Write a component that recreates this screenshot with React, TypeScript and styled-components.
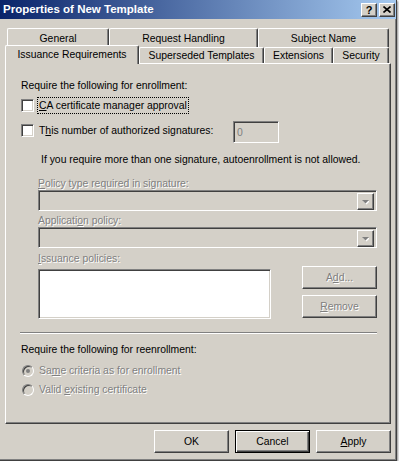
import styled, { createGlobalStyle, css } from 'styled-components';

const GlobalStyle = createGlobalStyle`
  html, body {
    margin: 0;
    padding: 0;
    background: #ffffff;
  }
  body {
    font-family: "Liberation Sans", Arial, sans-serif;
    font-size: 10.4px;
    line-height: 13px;
    color: #000;
  }
`;

const topTabs = [
  { label: 'General', width: 102 },
  { label: 'Request Handling', width: 149 },
  { label: 'Subject Name', width: 131 },
];

const frontTabs = [
  { label: 'Issuance Requirements', width: 134, active: true },
  { label: 'Superseded Templates', width: 125 },
  { label: 'Extensions', width: 69 },
  { label: 'Security', width: 56 },
];

function App() {
  return (
    <>
      <GlobalStyle />
      <Window>
        <TitleBar>
          <Title>Properties of New Template</Title>
          <CaptionButtons>
            <CaptionBtn>
              <HelpGlyph>?</HelpGlyph>
            </CaptionBtn>
            <CaptionBtn>
              <svg width="8" height="7" viewBox="0 0 8 7">
                <path d="M0.5 0.5 L7.5 6.5 M7.5 0.5 L0.5 6.5" stroke="#000" strokeWidth="1.6" />
              </svg>
            </CaptionBtn>
          </CaptionButtons>
        </TitleBar>

        <Body>
          <TabRow $back>
            {topTabs.map((t) => (
              <Tab key={t.label} $w={t.width} $back>
                {t.label}
              </Tab>
            ))}
          </TabRow>
          <TabRow>
            {frontTabs.map((t) => (
              <Tab key={t.label} $w={t.width} $active={t.active}>
                {t.label}
              </Tab>
            ))}
          </TabRow>

          <Panel>
            <Heading>Require the following for enrollment:</Heading>

            <CheckRow>
              <CheckBox />
              <FocusLabel>
                <Key>C</Key>A certificate manager approval
              </FocusLabel>
            </CheckRow>

            <SignRow>
              <CheckBox $top={3} />
              <SignLabel>
                T<Key>h</Key>is number of authorized signatures:
              </SignLabel>
              <NumberField>0</NumberField>
            </SignRow>

            <Note>If you require more than one signature, autoenrollment is not allowed.</Note>

            <PolicyGroup>
              <FieldLabel $top={11}>
                <Key>P</Key>olicy type required in signature:
              </FieldLabel>
              <Combo>
                <DropBtn>
                  <svg width="7" height="5" viewBox="0 0 7 5">
                    <path d="M1 1 H8 L4.5 4.5 Z" fill="#fff" />
                    <path d="M0 0 H7 L3.5 3.5 Z" fill="#808080" />
                  </svg>
                </DropBtn>
              </Combo>

              <FieldLabel $top={3}>
                Applicati<Key>o</Key>n policy:
              </FieldLabel>
              <Combo>
                <DropBtn>
                  <svg width="7" height="5" viewBox="0 0 7 5">
                    <path d="M1 1 H8 L4.5 4.5 Z" fill="#fff" />
                    <path d="M0 0 H7 L3.5 3.5 Z" fill="#808080" />
                  </svg>
                </DropBtn>
              </Combo>

              <ListRow>
                <ListColumn>
                  <FieldLabel $top={4}>
                    <Key>I</Key>ssuance policies:
                  </FieldLabel>
                  <ListBox />
                </ListColumn>
                <SideButtons>
                  <Button disabled>
                    A<Key>d</Key>d...
                  </Button>
                  <Button disabled>
                    <Key>R</Key>emove
                  </Button>
                </SideButtons>
              </ListRow>
            </PolicyGroup>

            <Separator />

            <Heading $top={9}>Require the following for reenrollment:</Heading>

            <RadioRow $top={6}>
              <Radio $checked />
              <RadioLabel>
                Sa<Key>m</Key>e criteria as for enrollment
              </RadioLabel>
            </RadioRow>
            <RadioRow $top={2}>
              <Radio />
              <RadioLabel>
                Valid <Key>e</Key>xisting certificate
              </RadioLabel>
            </RadioRow>
          </Panel>

          <ButtonBar>
            <Button>OK</Button>
            <Button $default>Cancel</Button>
            <Button>
              <Key>A</Key>pply
            </Button>
          </ButtonBar>
        </Body>
      </Window>
    </>
  );
}

export default App;

const disabledText = css`
  color: #808080;
  text-shadow: 1px 1px 0 #ffffff;
`;

const sunken = css`
  box-sizing: border-box;
  border: 1px solid;
  border-color: #808080 #ffffff #ffffff #808080;
  box-shadow: inset 1px 1px #404040, inset -1px -1px #d4d0c8;
`;

const raised = css`
  box-sizing: border-box;
  border: 1px solid;
  border-color: #ffffff #404040 #404040 #ffffff;
  box-shadow: inset -1px -1px #808080, inset 1px 1px #d4d0c8;
  background: #d4d0c8;
`;

const Window = styled.div`
  box-sizing: border-box;
  width: 397px;
  height: 461px;
  background: #d4d0c8;
  border-right: 1px solid #404040;
  border-bottom: 1px solid #404040;
  box-shadow: inset -1px -1px #808080, 1px 1px 2px rgba(0, 0, 0, 0.45);
  display: flex;
  flex-direction: column;
`;

const TitleBar = styled.div`
  height: 19px;
  flex: none;
  display: flex;
  align-items: center;
  padding: 0 1px 0 3px;
  background: linear-gradient(to right, #0a246a, #a6caf0);
`;

const Title = styled.div`
  color: #ffffff;
  font-weight: bold;
  font-size: 11.5px;
  white-space: nowrap;
`;

const CaptionButtons = styled.div`
  margin-left: auto;
  display: flex;
  gap: 2px;
`;

const CaptionBtn = styled.div`
  ${raised};
  width: 16px;
  height: 14px;
  display: flex;
  align-items: center;
  justify-content: center;
`;

const HelpGlyph = styled.span`
  font-weight: bold;
  font-size: 11px;
  line-height: 11px;
  margin-top: 1px;
`;

const Body = styled.div`
  padding: 9px 5px 0 5px;
  display: flex;
  flex-direction: column;
`;

const TabRow = styled.div<{ $back?: boolean }>`
  display: flex;
  align-items: flex-end;
  height: ${(p) => (p.$back ? 19 : 18)}px;
  padding-left: ${(p) => (p.$back ? 2 : 0)}px;
  margin-top: ${(p) => (p.$back ? 0 : -2)}px;
`;

const Tab = styled.div<{ $w: number; $active?: boolean; $back?: boolean }>`
  box-sizing: border-box;
  width: ${(p) => p.$w}px;
  height: ${(p) => (p.$active ? 19 : p.$back ? 19 : 16)}px;
  margin-bottom: ${(p) => (p.$active ? -1 : 0)}px;
  background: #d4d0c8;
  border-top: 1px solid #ffffff;
  border-left: 1px solid #ffffff;
  border-right: 1px solid #404040;
  border-top-left-radius: 2px;
  border-top-right-radius: 2px;
  box-shadow: inset -1px 0 #808080;
  display: flex;
  align-items: center;
  justify-content: center;
  white-space: nowrap;
  position: relative;
  z-index: ${(p) => (p.$active ? 2 : 0)};
  padding-bottom: ${(p) => (p.$active ? 1 : 0)}px;
`;

const Panel = styled.div`
  box-sizing: border-box;
  width: 386px;
  height: 361px;
  border: 1px solid;
  border-color: #ffffff #404040 #404040 #ffffff;
  box-shadow: inset -1px -1px #808080;
  padding: 15px 0 0 15px;
  display: flex;
  flex-direction: column;
  align-items: flex-start;
`;

const Heading = styled.div<{ $top?: number }>`
  margin-top: ${(p) => p.$top ?? 0}px;
  white-space: nowrap;
`;

const CheckRow = styled.div`
  display: flex;
  align-items: center;
  height: 17px;
  margin-top: 5px;
`;

const CheckBox = styled.span<{ $top?: number }>`
  ${sunken};
  display: block;
  flex: none;
  width: 13px;
  height: 13px;
  background: #ffffff;
  margin-top: ${(p) => p.$top ?? 0}px;
`;

const FocusLabel = styled.span`
  margin-left: 3px;
  padding: 0 1px;
  border: 1px dotted #000;
  line-height: 15px;
  white-space: nowrap;
`;

const Key = styled.span`
  text-decoration: underline;
`;

const SignRow = styled.div`
  display: flex;
  align-items: flex-start;
  margin-top: 7px;
  height: 22px;
`;

const SignLabel = styled.span`
  width: 194px;
  margin-left: 4px;
  padding-left: 1px;
  margin-top: 3px;
  white-space: nowrap;
`;

const NumberField = styled.div`
  ${sunken};
  ${disabledText};
  text-shadow: none;
  width: 46px;
  height: 22px;
  background: #d4d0c8;
  padding: 4px 0 0 3px;
`;

const Note = styled.div`
  margin: 10px 0 0 20px;
  white-space: nowrap;
`;

const PolicyGroup = styled.div`
  margin-left: 17px;
  width: 339px;
  display: flex;
  flex-direction: column;
`;

const FieldLabel = styled.div<{ $top: number }>`
  ${disabledText};
  margin-top: ${(p) => p.$top}px;
  white-space: nowrap;
`;

const Combo = styled.div`
  ${sunken};
  width: 339px;
  height: 21px;
  background: #d4d0c8;
  padding: 2px;
  display: flex;
  justify-content: flex-end;
`;

const DropBtn = styled.div`
  ${raised};
  width: 17px;
  height: 17px;
  display: flex;
  align-items: center;
  justify-content: center;
  padding-top: 1px;
`;

const ListRow = styled.div`
  display: flex;
  align-items: flex-end;
  justify-content: space-between;
`;

const ListColumn = styled.div`
  display: flex;
  flex-direction: column;
`;

const ListBox = styled.div`
  ${sunken};
  margin-top: 4px;
  width: 233px;
  height: 50px;
  background: #ffffff;
`;

const SideButtons = styled.div`
  display: flex;
  flex-direction: column;
  gap: 6px;
  margin-bottom: 1px;
`;

const Button = styled.button<{ $default?: boolean }>`
  ${raised};
  width: 75px;
  height: 23px;
  padding: 0;
  font: inherit;
  color: #000;
  display: flex;
  align-items: center;
  justify-content: center;
  ${(p) =>
    p.$default &&
    css`
      border: 1px solid #000000;
      box-shadow: inset 1px 1px #ffffff, inset -1px -1px #404040, inset -2px -2px #808080;
    `}
  &:disabled {
    ${disabledText};
  }
`;

const Separator = styled.div`
  margin: 13px 0 0 -1px;
  width: 357px;
  height: 0;
  border-top: 1px solid #808080;
  border-bottom: 1px solid #ffffff;
`;

const RadioRow = styled.div<{ $top: number }>`
  display: flex;
  align-items: center;
  height: 17px;
  margin-top: ${(p) => p.$top}px;
`;

const Radio = styled.span<{ $checked?: boolean }>`
  box-sizing: border-box;
  display: flex;
  align-items: center;
  justify-content: center;
  flex: none;
  width: 12px;
  height: 12px;
  margin-left: 1px;
  border-radius: 50%;
  border: 1px solid;
  border-color: #808080 #ffffff #ffffff #808080;
  box-shadow: inset 1px 1px #404040, inset -1px -1px #d4d0c8;
  background: #d4d0c8;
  &::after {
    content: '';
    width: 4px;
    height: 4px;
    border-radius: 50%;
    background: ${(p) => (p.$checked ? '#808080' : 'transparent')};
  }
`;

const RadioLabel = styled.span`
  ${disabledText};
  margin-left: 5px;
  white-space: nowrap;
`;

const ButtonBar = styled.div`
  display: flex;
  justify-content: flex-end;
  gap: 6px;
  margin-top: 6px;
  width: 386px;
`;
